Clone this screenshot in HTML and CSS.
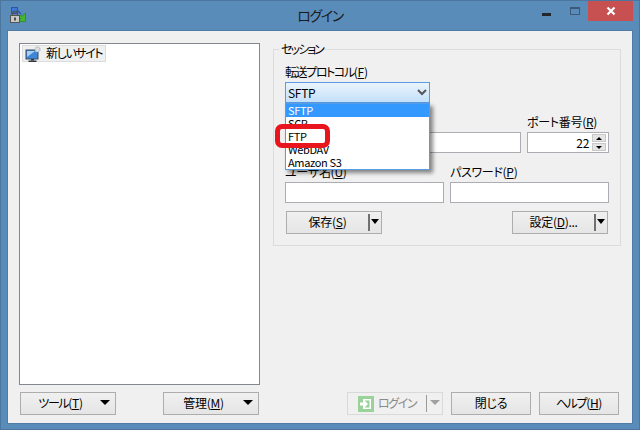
FILE: index.html

```html
<!DOCTYPE html>
<html lang="ja">
<head>
    <meta charset="utf-8">
    <title>ログイン</title>
    <link rel="stylesheet" href="styles.css">
</head>
<body>
    <div class="window">
        <div class="titlebar">
            <svg class="app-icon" width="16" height="16" viewBox="0 0 16 16">
                <rect x="1.5" y="0.5" width="6" height="6" fill="#3f78d8" stroke="#2a55a8"/>
                <path d="M7 3 L11 7" stroke="#2a55a8" stroke-width="1.5"/>
                <path d="M10.5 8 L12 9.5 L15.5 6 L15.5 14.5 L8 14.5 L11 11.5 L9 9.5 Z" fill="#46b82e" stroke="#2d8a1c" stroke-width="0.8"/>
                <path d="M2.5 9 V7 a2.5 2.5 0 0 1 5 0 V9" fill="none" stroke="#555" stroke-width="1.3"/>
                <rect x="0.5" y="8.5" width="9" height="7" fill="#c8c8c8" stroke="#555"/>
                <rect x="4.2" y="10.5" width="1.6" height="3" fill="#333"/>
            </svg>
            <div class="title">ログイン</div>
            <div class="caption-buttons">
                <div class="cap-min"><span></span></div>
                <div class="cap-max"><span></span></div>
                <div class="cap-close">
                    <svg width="10" height="10" viewBox="0 0 10 10"><path d="M1.5 1.5 L8.5 8.5 M8.5 1.5 L1.5 8.5" stroke="#fff" stroke-width="2.2"/></svg>
                </div>
            </div>
        </div>

        <div class="client">
            <div class="left-col">
                <div class="tree">
                    <div class="tree-item">
                        <svg width="16" height="16" viewBox="0 0 16 16">
                            <rect x="1" y="4" width="12" height="9" fill="#3f86d8" stroke="#3a4a5c"/>
                            <path d="M2 5 H10 L2 11 Z" fill="#a8d0f4"/>
                            <rect x="6" y="13" width="3" height="1.5" fill="#2a3644"/>
                            <rect x="3.5" y="14.5" width="8" height="1.5" fill="#2a3644"/>
                            <circle cx="12.5" cy="3.5" r="2.6" fill="#d8dde2" stroke="#9aa4ae" stroke-dasharray="1.5 0.8"/>
                        </svg>
                        <span class="tree-text kana">新しいサイト</span>
                    </div>
                </div>
                <div class="left-buttons">
                    <button class="btn btn-tool"><span class="btn-label"><span class="kana">ツール</span>(<u>T</u>)</span><i class="arrow"></i></button>
                    <button class="btn btn-tool"><span class="btn-label">管理(<u>M</u>)</span><i class="arrow"></i></button>
                </div>
            </div>

            <div class="right-col">
                <div class="group">
                    <div class="legend">セッション</div>
                    <label class="lbl"><span class="kana">転送プロトコル</span>(<u>F</u>)</label>
                    <div class="combo">
                        <span>SFTP</span>
                        <svg width="10" height="7" viewBox="0 0 10 7"><path d="M1 1 L5 5 L9 1" fill="none" stroke="#555" stroke-width="2"/></svg>
                    </div>
                    <div class="row row-host">
                        <div class="field field-host">
                            <label class="lbl"></label>
                            <div class="input"></div>
                        </div>
                        <div class="field field-port">
                            <label class="lbl">ポート番号(<u>R</u>)</label>
                            <div class="input input-port">
                                <span>22</span>
                                <div class="spin">
                                    <div><i class="tri-up"></i></div>
                                    <div><i class="tri-down"></i></div>
                                </div>
                            </div>
                        </div>
                    </div>
                    <div class="row row-user">
                        <div class="field field-half">
                            <label class="lbl">ユーザ名(<u>U</u>)</label>
                            <div class="input"></div>
                        </div>
                        <div class="field field-half">
                            <label class="lbl">パスワード(<u>P</u>)</label>
                            <div class="input"></div>
                        </div>
                    </div>
                    <div class="row row-actions">
                        <button class="btn btn-split"><span class="btn-label">保存(<u>S</u>)</span><b class="sep"></b><i class="arrow arrow-small"></i></button>
                        <button class="btn btn-split"><span class="btn-label">設定(<u>D</u>)...</span><b class="sep"></b><i class="arrow arrow-small"></i></button>
                    </div>

                    <div class="dropdown">
                        <div class="opt opt-on">SFTP</div>
                        <div class="opt">SCP</div>
                        <div class="opt">FTP</div>
                        <div class="opt">WebDAV</div>
                        <div class="opt">Amazon S3</div>
                    </div>
                    <div class="highlight"></div>
                </div>

                <div class="bottom-buttons">
                    <button class="btn btn-split btn-login">
                        <svg width="16" height="16" viewBox="0 0 16 16">
                            <rect width="16" height="16" fill="#9ad29a"/>
                            <rect x="5" y="3" width="8" height="10" fill="#fff"/>
                            <rect x="7" y="4.5" width="4.5" height="7" fill="#9ad29a"/>
                            <path d="M2 6.5 H6 V4 L10 8 L6 12 V9.5 H2 Z" fill="#fff"/>
                        </svg>
                        <span class="btn-label kana">ログイン</span><b class="sep"></b><i class="arrow"></i>
                    </button>
                    <button class="btn btn-plain">閉じる</button>
                    <button class="btn btn-plain"><span class="kana">ヘルプ</span>(<u>H</u>)</button>
                </div>
            </div>
        </div>
    </div>
</body>
</html>
```

FILE: styles.css

```css
* {
    box-sizing: border-box;
}

body {
    margin: 0;
    width: 640px;
    height: 430px;
    overflow: hidden;
    font-family: "Noto Sans CJK JP", "Noto Sans", sans-serif;
    font-size: 12px;
    font-feature-settings: "palt";
    letter-spacing: -0.3px;
    color: #000;
}

/* Meiryo UI kana are narrow, Noto's are not */
.kana {
    letter-spacing: -1.4px;
}

.window {
    width: 640px;
    height: 430px;
    display: flex;
    flex-direction: column;
    background-color: #5a8cba;
    border: 1px solid #4a76a0;
}

.titlebar {
    height: 30px;
    flex: none;
    display: flex;
    align-items: flex-start;
    position: relative;
}

.app-icon {
    margin: 6px 0 0 9px;
}

.title {
    position: absolute;
    left: 0;
    right: 0;
    top: 4px;
    text-align: center;
    font-size: 14px;
    line-height: 20px;
    letter-spacing: -1.4px;
    color: #1a1a1a;
}

.caption-buttons {
    margin-left: auto;
    margin-right: 6px;
    display: flex;
}

.cap-min {
    width: 29px;
    height: 20px;
    display: flex;
    justify-content: center;
    padding-top: 12px;
}

.cap-min span {
    width: 9px;
    height: 3px;
    background-color: #22272c;
}

.cap-max {
    width: 27px;
    height: 20px;
    display: flex;
    justify-content: center;
    padding-top: 6px;
}

.cap-max span {
    width: 10px;
    height: 8px;
    border: 1px solid #3c5a78;
    border-top-width: 2px;
}

.cap-close {
    width: 45px;
    height: 20px;
    background-color: #c75050;
    display: flex;
    justify-content: center;
    align-items: center;
}

.client {
    flex: 1;
    margin: 0 7px 7px;
    background-color: #f0f0f0;
    box-shadow: 0 0 0 1px #4f7da8;
    display: flex;
    padding: 12px 11px 8px 11px;
}

.left-col {
    width: 241px;
    flex: none;
    display: flex;
    flex-direction: column;
}

.tree {
    height: 342px;
    background-color: #fff;
    border: 1px solid #828790;
    padding: 1px 2px;
}

.tree-item {
    display: inline-flex;
    align-items: center;
    gap: 5px;
    height: 15px;
    padding: 0 3px 0 2px;
    background-color: #f0f0f0;
    border: 1px solid #dcdcdc;
    box-sizing: content-box;
}

.tree-text {
    line-height: 13px;
    padding-bottom: 2px;
}

.left-buttons {
    display: flex;
    justify-content: space-between;
    margin: 7px 1px 0;
}

.btn {
    font-family: inherit;
    font-size: 12px;
    font-feature-settings: inherit;
    letter-spacing: inherit;
    color: #000;
    height: 23px;
    padding: 0 0 2px;
    border: 1px solid #adadad;
    background: linear-gradient(#f0f0f0, #e5e5e5);
    display: flex;
    align-items: center;
    justify-content: center;
    white-space: nowrap;
}

.btn u {
    text-decoration: underline;
}

.arrow {
    width: 0;
    height: 0;
    border-left: 5px solid transparent;
    border-right: 5px solid transparent;
    border-top: 5px solid #000;
}

.arrow-small {
    border-left-width: 4px;
    border-right-width: 4px;
}

.btn-tool {
    width: 96px;
    padding: 0 5px 2px 0;
}

.btn-tool .btn-label {
    flex: 1;
    text-align: center;
}

.right-col {
    flex: 1;
    margin-left: 13px;
    display: flex;
    flex-direction: column;
}

.group {
    position: relative;
    height: 197px;
    margin-top: 6px;
    border: 1px solid #dcdcdc;
    padding: 15px 11px 0;
}

.legend {
    position: absolute;
    top: -8px;
    left: 5px;
    padding: 0 2px;
    line-height: 14px;
    letter-spacing: -1.9px;
    background-color: #f0f0f0;
}

.lbl {
    display: block;
    line-height: 13px;
    height: 15px;
}

.combo {
    width: 145px;
    height: 21px;
    margin-top: 2px;
    border: 1px solid #569de5;
    background: linear-gradient(#ebf4fc, #c4e0fa);
    display: flex;
    align-items: center;
    justify-content: space-between;
    padding: 0 2px;
}

.row {
    display: flex;
    justify-content: space-between;
}

.row-host {
    margin-top: 12px;
}

.row-user {
    margin-top: 12px;
}

.row-actions {
    margin: 8px 0 0 1px;
    width: 322px;
}

.field-host {
    width: 236px;
}

.field-port {
    width: 82px;
}

.field-half {
    width: 159px;
}

.input {
    height: 21px;
    margin-top: 2px;
    background-color: #fff;
    border: 1px solid #abadb3;
}

.input-port {
    display: flex;
    align-items: center;
    justify-content: flex-end;
    gap: 3px;
    padding-right: 2px;
}

.spin {
    width: 14px;
    height: 17px;
    display: flex;
    flex-direction: column;
    gap: 1px;
}

.spin div {
    flex: 1;
    background-color: #e4e4e4;
    border: 1px solid #c8c8c8;
    display: flex;
    align-items: center;
    justify-content: center;
}

.tri-up {
    border-left: 3px solid transparent;
    border-right: 3px solid transparent;
    border-bottom: 3px solid #000;
}

.tri-down {
    border-left: 3px solid transparent;
    border-right: 3px solid transparent;
    border-top: 3px solid #000;
}

.btn-split {
    width: 96px;
    padding-right: 2px;
}

.btn-split .btn-label {
    flex: 1;
    text-align: center;
}

.sep {
    width: 2px;
    height: 17px;
    margin-top: 2px;
    background-color: #707070;
    margin-right: 1px;
}

.dropdown {
    position: absolute;
    left: 11px;
    top: 53px;
    width: 145px;
    height: 67px;
    background-color: #fff;
    border: 1px solid #569de5;
    box-shadow: 3px 3px 4px rgba(0, 0, 0, 0.45);
}

.opt {
    height: 13px;
    line-height: 13px;
    padding-left: 2px;
    font-size: 11px;
    letter-spacing: -0.35px;
}

.opt-on {
    background-color: #3399ff;
    color: #fff;
}

.highlight {
    position: absolute;
    left: 1px;
    top: 74px;
    width: 55px;
    height: 24px;
    border: 5px solid #e8141e;
    border-radius: 7px;
}

.bottom-buttons {
    display: flex;
    justify-content: flex-end;
    gap: 8px;
    margin-top: auto;
    padding-right: 2px;
}

.btn-login {
    width: 96px;
    border-color: #d9d9d9;
    background: #f0f0f0;
    color: #8a8a8a;
    padding-left: 10px;
}

.btn-login svg {
    margin-top: 2px;
}

.btn-login .btn-label {
    text-align: left;
    padding-left: 4px;
}

.btn-login .sep {
    width: 1px;
    margin-right: 3px;
    background-color: #999;
}

.btn-login .arrow {
    border-top-color: #a0a0a0;
}

.btn-plain {
    width: 80px;
}
```
